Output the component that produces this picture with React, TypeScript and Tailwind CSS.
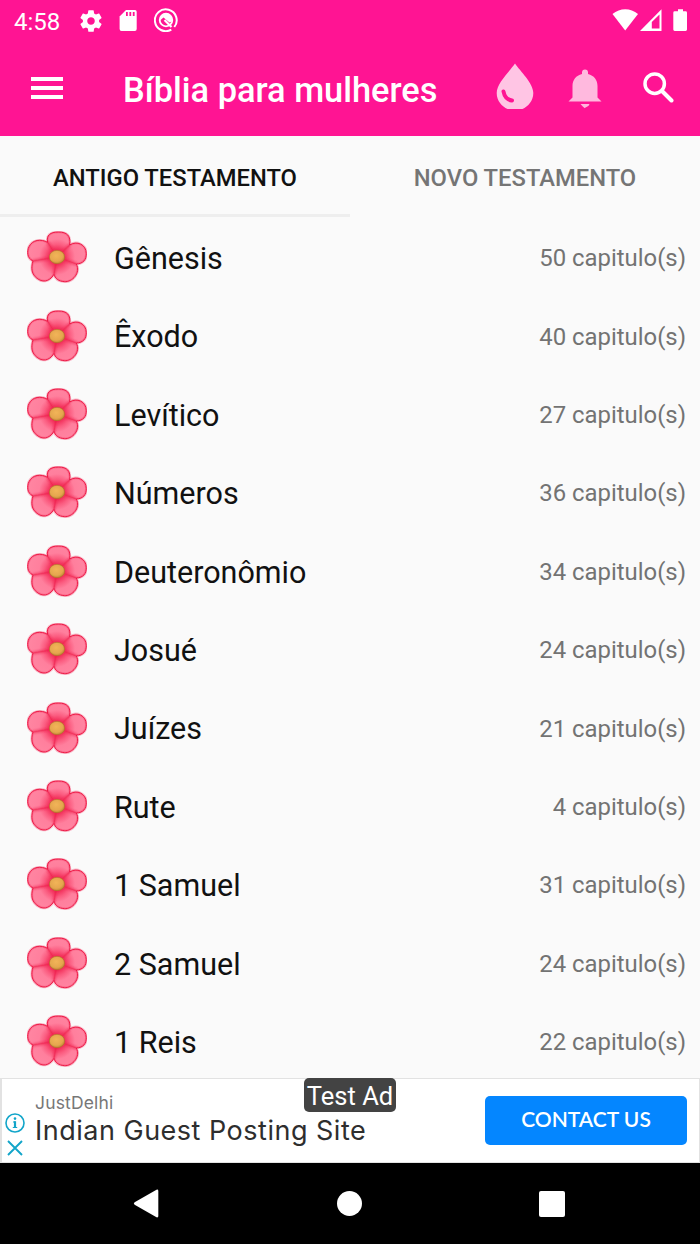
import React, { useState } from "react";

const books = [
    { name: "Gênesis", chapters: 50 },
    { name: "Êxodo", chapters: 40 },
    { name: "Levítico", chapters: 27 },
    { name: "Números", chapters: 36 },
    { name: "Deuteronômio", chapters: 34 },
    { name: "Josué", chapters: 24 },
    { name: "Juízes", chapters: 21 },
    { name: "Rute", chapters: 4 },
    { name: "1 Samuel", chapters: 31 },
    { name: "2 Samuel", chapters: 24 },
    { name: "1 Reis", chapters: 22 },
];

const outline =
    "M98 66C93 45 106 35 130 35C156 35 168 46 164 74C185 60 214 72 214 100C214 118 205 130 184 131C198 158 172 186 148 184C130 183 120 174 117 162C101 188 80 185 66 174C50 162 47 144 54 122C36 114 35 93 42 79C52 58 78 55 98 66Z";

// dark veins where two petals meet
const seams = "M126 110L98 66M126 110L164 74M126 110L184 131M126 110L117 162M126 110L54 122";

const Flower: React.FC = () => (
    <svg viewBox="36 32 180 156" className="w-[60px] h-[52px] shrink-0">
        <defs>
            <radialGradient id="petal" gradientUnits="userSpaceOnUse" cx="126" cy="110" r="90">
                <stop offset="0.2" stopColor="#ef2450" />
                <stop offset="0.42" stopColor="#fb5c80" />
                <stop offset="0.6" stopColor="#ff7f9d" />
                <stop offset="1" stopColor="#ff86a2" />
            </radialGradient>
            <radialGradient id="center" cx="0.45" cy="0.4" r="0.6">
                <stop offset="0" stopColor="#f2b458" />
                <stop offset="0.7" stopColor="#e5a64e" />
                <stop offset="1" stopColor="#c08836" />
            </radialGradient>
            <filter id="soft">
                <feGaussianBlur stdDeviation="2.5" />
            </filter>
        </defs>
        <path d={outline} fill="url(#petal)" />
        <path d={outline} fill="none" stroke="#f4406a" strokeWidth="8" strokeOpacity="0.35" />
        <path d={seams} fill="none" stroke="#ee1f4b" strokeWidth="9" strokeOpacity="0.6" filter="url(#soft)" />
        <path d={seams} fill="none" stroke="#ee1f4b" strokeWidth="2" strokeOpacity="0.7" />
        <path d={outline} fill="none" stroke="#ee1744" strokeWidth="3" strokeLinejoin="round" />
        <ellipse cx="126" cy="110" rx="23" ry="20" fill="url(#center)" stroke="#b3712c" strokeWidth="2" />
    </svg>
);

const StatusBar: React.FC = () => (
    <div className="flex h-[41px] items-start justify-between pl-[14px] pr-[12px]">
        <div className="flex">
            <span className="w-[64px] pt-[9px] text-[24px] leading-[26px]">4:58</span>
            <svg viewBox="0 0 24 24" className="mt-[8px] size-[26px]" fill="currentColor">
                <path d="M19.43 12.98c.04-.32.07-.64.07-.98s-.03-.66-.07-.98l2.11-1.65c.19-.15.24-.42.12-.64l-2-3.46c-.12-.22-.39-.3-.61-.22l-2.49 1c-.52-.4-1.08-.73-1.69-.98l-.38-2.65C14.46 2.18 14.25 2 14 2h-4c-.25 0-.46.18-.49.42l-.38 2.65c-.61.25-1.17.59-1.69.98l-2.49-1c-.23-.09-.49 0-.61.22l-2 3.46c-.13.22-.07.49.12.64l2.11 1.65c-.04.32-.07.65-.07.98s.03.66.07.98l-2.11 1.65c-.19.15-.24.42-.12.64l2 3.46c.12.22.39.3.61.22l2.49-1c.52.4 1.08.73 1.69.98l.38 2.65c.03.24.24.42.49.42h4c.25 0 .46-.18.49-.42l.38-2.65c.61-.25 1.17-.59 1.69-.98l2.49 1c.23.09.49 0 .61-.22l2-3.46c.12-.22.07-.49-.12-.64l-2.11-1.65zM12 15.5c-1.93 0-3.5-1.57-3.5-3.5s1.57-3.5 3.5-3.5 3.5 1.57 3.5 3.5-1.57 3.5-3.5 3.5z" />
            </svg>
            <svg viewBox="0 0 18 22" className="ml-[15px] mt-[9px] h-[22px] w-[18px]">
                <path d="M7 1h9q1.700 0 1.700 1.800V20q0 1.900-1.900 1.900H2.500Q.6 21.900.6 20V7.400Z" fill="currentColor" />
                <path d="M7.900 3v4M11.300 3v4M14.700 3v4" stroke="#ff1493" strokeWidth="1.800" />
            </svg>
            <svg viewBox="0 0 24 24" className="ml-[17px] mt-[8px] size-[24px]" fill="none" stroke="currentColor">
                <path d="M17.300 21.600A10.900 10.900 0 1 1 20.300 19" strokeWidth="2" />
                <circle cx="12" cy="12" r="6.300" strokeWidth="1.800" />
                <path d="M6 12.500L9.500 9.500L15.500 14.500L18 13.200C18.500 8 15.500 5.500 12 5.500S6 8 6 12.500Z" fill="currentColor" stroke="none" />
                <path d="M10.500 12l7 7" strokeWidth="2.200" />
            </svg>
        </div>
        <svg viewBox="0 0 78 24" className="mt-[8px] h-[24px] w-[78px]" fill="currentColor">
            <path d="M2.500 6C10-.3 20.500-.3 28 6L15.200 22.400Z" />
            <path fillRule="evenodd" d="M51.500 1.300V23H30ZM49.500 6.500V20.500H41.800V14Z" />
            <path d="M68 1.300h5v2h2.600q1.400 0 1.400 1.400v16.900q0 1.400-1.400 1.400H64.700q-1.400 0-1.400-1.400V4.700q0-1.400 1.400-1.400H68Z" />
        </svg>
    </div>
);

const AppBar: React.FC = () => (
    <div className="flex h-[95px] items-center pl-[31px] pr-[26px]">
        <button type="button" aria-label="Menu" className="-mt-px flex w-8 flex-col gap-[5px]">
            <span className="h-1 bg-white" />
            <span className="h-1 bg-white" />
            <span className="h-1 bg-white" />
        </button>
        <h1 className="ml-[60px] flex-1 whitespace-nowrap pt-[3px] text-[34.4px] font-medium leading-10">
            Bíblia para mulheres
        </h1>
        <div className="flex items-center">
            <svg viewBox="0 0 38 47" className="-mt-[5px] mr-[34px] h-[47px] w-[38px]">
                <path d="M19 .5C14 8 .7 20 .7 30C.7 38 6 43.500 11.500 46H26.500C32 43.500 37.300 38 37.300 30C37.300 20 24 8 19 .5Z" fill="#ffc5e4" />
                <path d="M7.500 28.500Q9 36.500 16 37.500" fill="none" stroke="#ff1493" strokeWidth="4" strokeLinecap="round" />
            </svg>
            <svg viewBox="0 0 34 40" className="mr-[41px] h-[40px] w-[34px]" fill="#ffb9de">
                <path d="M14 5V3.500a3 3 0 0 1 6 0V5C26 6.500 29.500 11 29.500 17V28.500L33.500 32.500H.5L4.500 28.500V17C4.500 11 8 6.500 14 5Z" />
                <path d="M12.500 35h9q-.5 2-2.500 2.700T17 39T15 37.700T12.500 35Z" />
            </svg>
            <svg viewBox="0 0 31 31" className="-mt-[2px] h-[31px] w-[31px]" fill="none" stroke="currentColor">
                <circle cx="11.700" cy="11.700" r="9.700" strokeWidth="3.500" />
                <path d="M19.500 19.500L28.500 28.500" strokeWidth="4" strokeLinecap="round" />
            </svg>
        </div>
    </div>
);

const AdBanner: React.FC = () => (
    <div className="relative flex h-[85px] shrink-0 items-start border border-l-2 border-[#e2e2e2] bg-white pl-[3px] pr-3">
        <div className="mt-[34px] flex w-5 flex-col items-center gap-[7px]">
            <svg viewBox="0 0 20 20" className="size-5" fill="none" stroke="#12a5c9">
                <circle cx="10" cy="10" r="9" strokeWidth="1.600" />
                <path d="M10 8.200v6.800" strokeWidth="2.200" />
                <path d="M8 9h2M7.800 14.500h4.400" strokeWidth="1.200" />
                <circle cx="10" cy="5.600" r="1.300" fill="#12a5c9" stroke="none" />
            </svg>
            <svg viewBox="0 0 16 16" className="size-4" stroke="#12a5c9" strokeWidth="1.900">
                <path d="M1 1L15 15M15 1L1 15" />
            </svg>
        </div>
        <div className="ml-[10px] flex-1 pt-[13px] font-['Inter',sans-serif]">
            <p className="text-[17.5px] leading-[22px] tracking-[0.15px] text-[#777]">JustDelhi</p>
            <p className="mt-[2px] whitespace-nowrap text-[27px] leading-[30px] tracking-[0.5px] text-[#2e2e2e]">
                Indian Guest Posting Site
            </p>
        </div>
        <button
            type="button"
            className="mt-[17px] h-[49px] w-[202px] rounded-[5px] bg-[#0486ff] pb-[4px] font-['Lato',sans-serif] text-[21px] font-semibold text-white"
        >
            CONTACT US
        </button>
        <span className="absolute left-[302px] top-[-1px] h-[34px] w-[92px] rounded-[5px] bg-[#434343] text-center text-[25.5px] leading-[37px] text-white">
            Test Ad
        </span>
    </div>
);

const NavBar: React.FC = () => (
    <div className="flex h-[81px] items-center justify-between bg-black pl-[133px] pr-[135px]">
        <svg viewBox="0 0 26 29" className="h-[29px] w-[26px]" fill="white">
            <path d="M23.500.7Q25.300.1 25.300 2V27Q25.300 28.900 23.500 28.300L1.600 15.800Q0 14.500 1.600 13.200Z" />
        </svg>
        <span className="size-[25px] rounded-full bg-white" />
        <span className="size-[26px] rounded-[2px] bg-white" />
    </div>
);

const App: React.FC = () => {
    const [tab, setTab] = useState(0);

    return (
        <div className="flex h-[1244px] w-[700px] flex-col overflow-hidden bg-[#fafafa] font-['Roboto',sans-serif]">
            <header className="h-[136px] shrink-0 bg-[#ff1493] text-white">
                <StatusBar />
                <AppBar />
            </header>

            <div className="grid h-[82px] shrink-0 grid-cols-2 pb-px">
                {["ANTIGO TESTAMENTO", "NOVO TESTAMENTO"].map((label, i) => (
                    <button
                        key={label}
                        type="button"
                        onClick={() => setTab(i)}
                        className={`border-b-[3px] pt-[7px] text-[23.75px] font-medium ${
                            tab === i ? "border-[#eeeeee] text-[#111]" : "border-transparent text-[#757575]"
                        }`}
                    >
                        {label}
                    </button>
                ))}
            </div>

            {/* Book list */}
            <ul className="h-[860px] shrink-0 overflow-hidden">
                {books.map((book) => (
                    <li key={book.name} className="flex h-[78.4px] items-center pl-[27px] pr-[14px]">
                        <Flower />
                        <span className="ml-[27px] flex-1 pt-[3.5px] text-[30.5px] text-[#111]">{book.name}</span>
                        <span className="pt-[4px] text-[23.9px] text-[#737373]">
                            {book.chapters} capitulo(s)
                        </span>
                    </li>
                ))}
            </ul>

            <AdBanner />
            <NavBar />
        </div>
    );
};

export default App;
